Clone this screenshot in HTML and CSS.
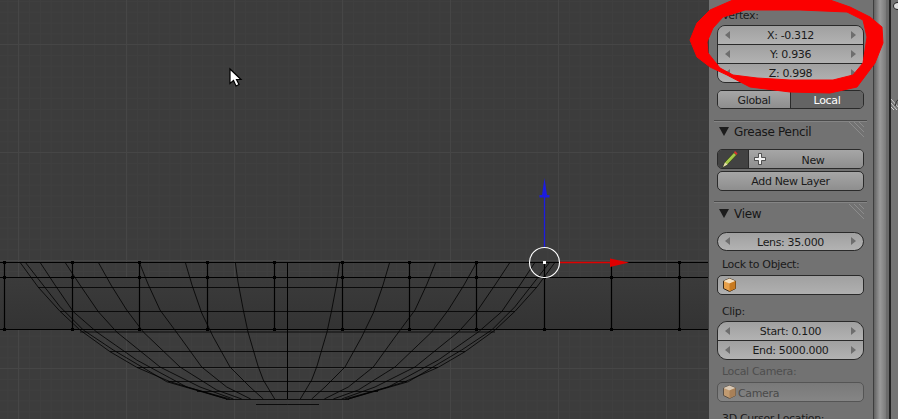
FILE: index.html
```html
<!DOCTYPE html>
<html lang="en">
<head>
<meta charset="utf-8">
<title>Blender viewport</title>
<link rel="stylesheet" href="styles.css">
</head>
<body>
<div class="app">
  <main class="viewport">
    <svg class="scene" width="708" height="419" viewBox="0 0 708 419">
      <defs>
        <linearGradient id="band" x1="0" y1="0" x2="0" y2="1">
          <stop offset="0" stop-color="#3b3b3b"/>
          <stop offset="1" stop-color="#333"/>
        </linearGradient>
        <g id="half" fill="none" stroke="#000" stroke-width="0.8">
          <polyline points="235.3,262.3 238,282 243.3,310 248,332 253.3,350 258,366 263.3,380 274.7,399"/>
          <polyline points="185.3,262.3 192,285 201.7,313 213.3,337 230,367 250,387 263.3,399"/>
          <polyline points="139.3,262.3 148,284 160,310 180,337 201.7,367 226.7,387 250.7,399"/>
          <polyline points="98.3,262.3 111,285 126.7,310 143.3,332 180,367 216.7,390 241.7,399"/>
          <polyline points="65,262.3 80,285 98.3,311.7 116.7,332 160,367 200,387 233.3,399"/>
          <polyline points="40,262.3 55,285 73.3,311.7 96.7,332 136.7,360 186.7,387 230,399"/>
          <polyline points="25.3,262.3 60,306.7 83.3,330 113.3,350 166.7,381.7 226.7,399"/>
          <polyline points="20,262.3 38.3,287.3 60,311.3 80,330 110,351.7 136.7,367.3 170,381.7 226.7,399"/>
          <path d="M38 287.5H287.5M60 311.5H287.5M80 332H287.5M110 351.5H287.5M137 367.5H287.5M168 381.5H287.5M197 391.5H287.5M226 399.5H287.5M256 404.5H287.5"/>
        </g>
      </defs>
      <rect x="0" y="277" width="708" height="52" fill="url(#band)"/>
      <use href="#half"/>
      <use href="#half" transform="translate(575 0) scale(-1 1)"/>
      <path class="cage" d="M0 262.5H708M0 277.5H708M0 329.5H708M4.5 262V330M72.5 262V330M139.5 262V330M207.5 262V330M274.5 262V330M342.5 262V330M409.5 262V330M476.5 262V330M544.5 262V330M611.5 262V330M679.5 262V330"/>
      <path class="thin" d="M287.5 262V399"/>
      <path class="nodes" d="M4.5 261v3M72.5 261v3M139.5 261v3M207.5 261v3M274.5 261v3M342.5 261v3M409.5 261v3M476.5 261v3M611.5 261v3M679.5 261v3M4.5 276v3M72.5 276v3M139.5 276v3M207.5 276v3M274.5 276v3M342.5 276v3M409.5 276v3M476.5 276v3M544.5 276v3M611.5 276v3M679.5 276v3M4.5 328v3M72.5 328v3M139.5 328v3M207.5 328v3M274.5 328v3M342.5 328v3M409.5 328v3M476.5 328v3M544.5 328v3M611.5 328v3M679.5 328v3"/>
      <path class="axis-z" d="M544.5 247V195"/>
      <path class="tip-z" d="M544.5 178L547 195H549.5V197.500H539.500V195H542Z"/>
      <path class="axis-x" d="M559 262.500H612"/>
      <path class="tip-x" d="M610 258.500L629 262.500L610 267Z"/>
      <circle class="ring" cx="544.500" cy="262.500" r="15"/>
      <rect class="dot" x="543" y="261" width="3" height="3"/>
      <path class="mouse" d="M230 69V83.500L233.500 80.500L236 86L239 84.500L236.500 79.500H241Z"/>
    </svg>
  </main>

  <aside class="panel">
    <div class="label first">Vertex:</div>
    <div class="stack">
      <div class="num">X: -0.312</div>
      <div class="num">Y: 0.936</div>
      <div class="num">Z: 0.998</div>
    </div>
    <div class="seg">
      <div class="seg-item">Global</div>
      <div class="seg-item on">Local</div>
    </div>

    <section class="sect">
      <header class="head"><span class="tri"></span>Grease Pencil
        <svg class="grip" width="16" height="16" viewBox="0 0 16 16"><path d="M1 0L16 15M6 0L16 10M11 0L16 5"/></svg>
      </header>
      <div class="btn-row">
        <div class="pen-btn">
          <svg width="16" height="18" viewBox="0 0 16 18">
            <path d="M1 17L3 12L12 2.500L14.500 5L5.500 14.500Z" fill="#a4c84a" stroke="#2e3a16" stroke-width="0.700"/>
            <path d="M1 17L3 12.500L5.500 14.500Z" fill="#e8dcb0"/>
            <path d="M12 2.500L13 1L15.500 3.500L14.500 5Z" fill="#e23030"/>
          </svg>
        </div>
        <div class="new-btn">
          <svg class="plus" width="12" height="12" viewBox="0 0 12 12"><path d="M4.500 .5H7.500V4.500H11.500V7.500H7.500V11.500H4.500V7.500H.5V4.500H4.500Z" fill="#f2f2f2" stroke="#333" stroke-width="0.800"/></svg>
          <span class="new-txt">New</span>
        </div>
      </div>
      <div class="btn add">Add New Layer</div>
    </section>

    <section class="sect view">
      <header class="head"><span class="tri"></span>View
        <svg class="grip" width="16" height="16" viewBox="0 0 16 16"><path d="M1 0L16 15M6 0L16 10M11 0L16 5"/></svg>
      </header>
      <div class="num solo">Lens: 35.000</div>
      <div class="label lock">Lock to Object:</div>
      <div class="field">
        <svg width="13" height="14" viewBox="0 0 13 14"><path d="M6.500 .5L12.500 3V10.500L6.500 13.500L.5 10.500V3Z" fill="#e8a04a" stroke="#3a2a18"/><path d="M.5 3L6.500 5.500L12.500 3L6.500 .5Z" fill="#f6e0c0"/><path d="M6.500 5.500V13.500L12.500 10.500V3Z" fill="#c87a20"/></svg>
      </div>
      <div class="label clip">Clip:</div>
      <div class="stack round">
        <div class="num">Start: 0.100</div>
        <div class="num">End: 5000.000</div>
      </div>
      <div class="label muted">Local Camera:</div>
      <div class="field off">
        <svg width="13" height="14" viewBox="0 0 13 14"><path d="M6.500 .5L12.500 3V10.500L6.500 13.500L.5 10.500V3Z" fill="#c09a70" stroke="#5a5046"/><path d="M.5 3L6.500 5.500L12.500 3L6.500 .5Z" fill="#d8c8b4"/><path d="M6.500 5.500V13.500L12.500 10.500V3Z" fill="#a88058"/></svg>
        <span class="cam">Camera</span>
      </div>
      <div class="label cursor">3D Cursor Location:</div>
    </section>
  </aside>

  <div class="scroll"></div>

  <aside class="edge">
    <span class="zoomer"></span>
    <svg class="corner" width="8" height="12" viewBox="0 0 8 12"><path d="M0 1L8 10M0 5L6 12M0 9L3 12"/><path class="arc" d="M4 8Q5 2 8 1"/></svg>
  </aside>

  <svg class="scribble" width="898" height="110" viewBox="0 0 898 110">
    <path d="M733 -5L733 0L710 10L697 23L690 40L697 57L710 67L727 75L750 87L790 92L830 93L857 87L875 63L883 43L882 27L870 17L850 7L830 0L830 -5Z M800 10L847 12L863 20L867 37L863 63L853 75L833 80L790 80L757 78L733 75L720 68L708 53L707 42L713 28L723 17L745 10Z"/>
  </svg>
</div>
</body>
</html>
```
FILE: styles.css
```css
html, body { margin: 0; padding: 0; }
body { width: 898px; height: 419px; overflow: hidden; background: #3c3c3c; }
.app {
  position: relative; display: flex; width: 898px; height: 419px; overflow: hidden;
  font: 11px "DejaVu Sans", sans-serif; letter-spacing: -0.35px; color: #1a1a1a;
}
.viewport {
  width: 708px; height: 419px; flex: none;
  background-color: #3c3c3c;
  background-image:
    linear-gradient(90deg, #464646 1px, transparent 1px),
    linear-gradient(#464646 1px, transparent 1px),
    linear-gradient(90deg, #3f3f3f 1px, transparent 1px),
    linear-gradient(#3f3f3f 1px, transparent 1px);
  background-size: 108px 108px, 108px 108px, 10.8px 10.8px, 10.8px 10.8px;
  background-position: 18px 0, 0 44px, 7.5px 0, 0 1px;
}
.scene { display: block; }
.cage { fill: none; stroke: #000; stroke-width: 1.2; }
.thin { fill: none; stroke: #000; stroke-width: 1; }
.nodes { fill: none; stroke: #000; stroke-width: 3; }
.axis-z { fill: none; stroke: #1c1ce0; stroke-width: 1.300; }
.tip-z { fill: #1c1ce0; }
.axis-x { fill: none; stroke: #e00000; stroke-width: 1.300; }
.tip-x { fill: #e00000; }
.ring { fill: none; stroke: #fff; stroke-width: 1.100; }
.dot { fill: #fff; }
.mouse { fill: #fff; stroke: #000; stroke-width: 1.200; }

.panel {
  width: 164px; height: 419px; flex: none; box-sizing: border-box;
  margin-left: 1px; padding: 0 9px 0 8px; background: #727272; overflow: hidden;
}
.label { height: 14px; line-height: 16px; padding-left: 5px; }
.label.first { margin-top: 8px; margin-bottom: 3px; }
.stack {
  border: 1px solid #2a2a2a; border-radius: 8px; overflow: hidden; box-sizing: border-box;
}
.num {
  position: relative; height: 19px; box-sizing: border-box; line-height: 20px; text-align: center;
  background: linear-gradient(#a0a0a0, #b2b2b2);
}
.num:first-child { height: 18px; }
.num + .num { border-top: 1px solid #2a2a2a; }
.num::before, .num::after {
  content: ""; position: absolute; top: 5px;
  border: 4px solid transparent;
}
.num::before { left: 7px; border-left-width: 0; border-right: 5px solid #6e6e6e; }
.num::after { right: 7px; border-right-width: 0; border-left: 5px solid #6e6e6e; }
.seg {
  display: flex; height: 19px; margin-top: 7px; box-sizing: border-box;
  border: 1px solid #2a2a2a; border-radius: 5px; overflow: hidden; line-height: 19px; text-align: center;
}
.seg-item { flex: 1; background: linear-gradient(#a6a6a6, #8e8e8e); }
.seg-item.on { background: #646464; color: #fff; border-left: 1px solid #2a2a2a; }
.sect { position: relative; border-top: 1px solid #4a4a4a; box-shadow: 0 1px 0 #858585 inset; margin: 11px -3px 0; padding: 0 3px; }
.head {
  position: relative; height: 20px; line-height: 22px; font-size: 12px; letter-spacing: -0.3px; color: #161616;
  padding-left: 20px; margin-left: -3px;
}
.tri {
  position: absolute; left: 5px; top: 6px;
  border-left: 5px solid transparent; border-right: 5px solid transparent; border-top: 9px solid #1c1c1c;
}
.grip { position: absolute; right: 0; top: 1px; fill: none; stroke: #8c8c8c; stroke-width: 1; }
.btn-row {
  display: flex; height: 20px; margin-top: 8px; box-sizing: border-box;
  border: 1px solid #2a2a2a; border-radius: 5px; overflow: hidden;
}
.pen-btn {
  width: 30px; flex: none; box-sizing: content-box; background: #424242; border-right: 1px solid #2a2a2a;
  display: flex; align-items: center; justify-content: flex-start; padding-left: 0;
}
.pen-btn svg { margin-left: 4px; }
.new-btn {
  position: relative; flex: 1; display: flex; align-items: center; padding-left: 5px;
  background: linear-gradient(#a6a6a6, #8e8e8e);
}
.new-txt { flex: 1; text-align: center; padding: 2px 3px 0 0; }
.btn {
  height: 20px; box-sizing: border-box; border: 1px solid #2a2a2a; border-radius: 5px;
  background: linear-gradient(#a6a6a6, #8e8e8e); line-height: 20px; text-align: center;
}
.btn.add { margin-top: 2px; }
.view { margin-top: 10px; }
.view .head { margin-top: 1px; }
.num.solo { margin-top: 9px; border: 1px solid #2a2a2a; border-radius: 10px; line-height: 19px; height: 19px; }
.num.solo::before, .num.solo::after { top: 4px; }
.label.lock { margin-top: 6px; }
.field {
  display: flex; align-items: center; gap: 2px; height: 20px; margin-top: 4px; box-sizing: border-box;
  padding-left: 5px; border: 1px solid #2a2a2a; border-radius: 5px;
  background: linear-gradient(#a0a0a0, #b0b0b0);
}
.cam { padding-top: 3px; }
.label.clip { margin-top: 9px; }
.stack.round { margin-top: 3px; border-radius: 10px; }
.label.muted { margin-top: 4px; color: #4e4e4e; }
.field.off { margin-top: 4px; border-color: #555; background: linear-gradient(#797979, #858585); color: #4a4a4a; }
.label.cursor { margin-top: 8px; line-height: 18px; }

.scroll {
  width: 16px; height: 419px; flex: none; box-sizing: border-box; border-left: 1px solid #3e3e3e;
  background: linear-gradient(90deg, #626262 0, #9a9a9a 6px, #7a7a7a 12px, #6a6a6a 12px);
}
.edge { position: relative; flex: 1; border-left: 2px solid #222; background: #747474; }
.zoomer {
  position: absolute; left: 2px; top: 2px; width: 10px; height: 8px;
  background: #ddd; border: 1px solid #222; border-radius: 50%; box-sizing: border-box;
}
.corner { position: absolute; left: 0; top: 98px; fill: none; stroke: #d0d0d0; stroke-width: 1; }
.corner .arc { stroke: #333; }
.scribble {
  position: absolute; left: 0; top: 0; fill: #fb0000; fill-rule: evenodd; stroke: #fb0000; stroke-width: 1; stroke-linejoin: round;
}
```
